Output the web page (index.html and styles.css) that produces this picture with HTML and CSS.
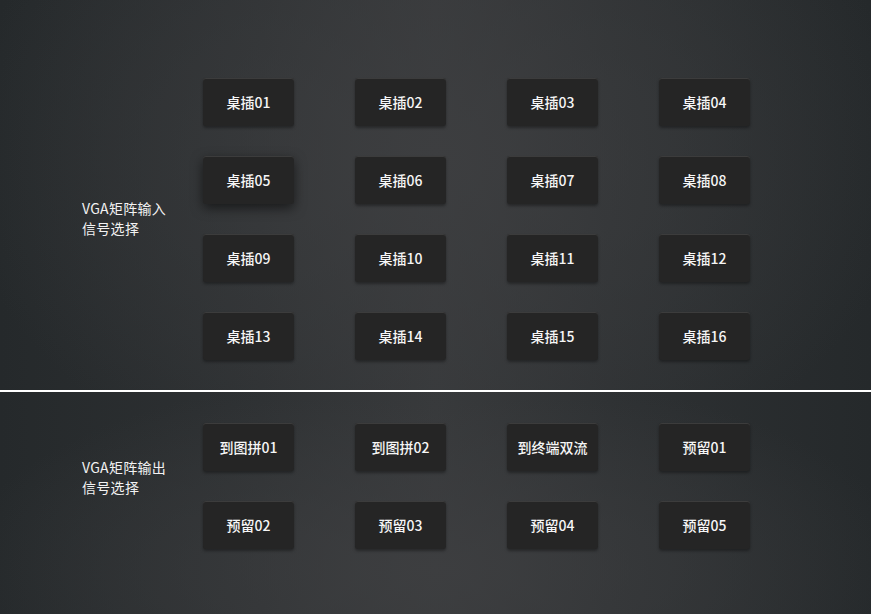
FILE: index.html
```html
<!DOCTYPE html>
<html lang="zh-CN">
<head>
<meta charset="utf-8">
<title>VGA矩阵</title>
<link rel="stylesheet" href="styles.css">
</head>
<body>
<section class="panel panel-in">
  <div class="label label-in">VGA矩阵输入<br>信号选择</div>
  <div class="grid">
    <div class="btn">桌插01</div>
    <div class="btn">桌插02</div>
    <div class="btn">桌插03</div>
    <div class="btn">桌插04</div>
    <div class="btn btn-hover">桌插05</div>
    <div class="btn">桌插06</div>
    <div class="btn">桌插07</div>
    <div class="btn">桌插08</div>
    <div class="btn">桌插09</div>
    <div class="btn">桌插10</div>
    <div class="btn">桌插11</div>
    <div class="btn">桌插12</div>
    <div class="btn">桌插13</div>
    <div class="btn">桌插14</div>
    <div class="btn">桌插15</div>
    <div class="btn">桌插16</div>
  </div>
</section>
<div class="divider"></div>
<section class="panel panel-out">
  <div class="label label-out">VGA矩阵输出<br>信号选择</div>
  <div class="grid">
    <div class="btn">到图拼01</div>
    <div class="btn">到图拼02</div>
    <div class="btn">到终端双流</div>
    <div class="btn">预留01</div>
    <div class="btn">预留02</div>
    <div class="btn">预留03</div>
    <div class="btn">预留04</div>
    <div class="btn">预留05</div>
  </div>
</section>
</body>
</html>
```
FILE: styles.css
```css
html, body {
  margin: 0;
  padding: 0;
}
body {
  width: 871px;
  height: 614px;
  overflow: hidden;
  font-family: "Noto Sans CJK SC", "Noto Sans", sans-serif;
  color: #f2f2f2;
  background: #2c2e30;
}
.panel {
  display: flex;
  align-items: flex-start;
  box-sizing: border-box;
  background:
    radial-gradient(ellipse 55% 90% at 50% 40%, rgba(62,63,65,0.85) 0%, rgba(62,63,65,0) 100%),
    linear-gradient(90deg, #25292b 0%, #2e3133 30%, #37393b 50%, #2e3133 70%, #25292b 100%);
}
.panel-in {
  height: 390px;
  padding-top: 78px;
}
.panel-out {
  height: 222px;
  padding-top: 31px;
  background:
    radial-gradient(ellipse 55% 90% at 50% 80%, rgba(62,63,65,0.85) 0%, rgba(62,63,65,0) 100%),
    linear-gradient(90deg, #25292b 0%, #2e3133 30%, #37393b 50%, #2e3133 70%, #25292b 100%);
}
.divider {
  height: 2px;
  background: #ffffff;
}
.label {
  width: 121px;
  padding-left: 82px;
  font-size: 14px;
  line-height: 20px;
  color: #f2f2f2;
  letter-spacing: 0.3px;
}
.label-in {
  margin-top: 120px;
}
.label-out {
  margin-top: 34px;
}
.grid {
  display: grid;
  grid-template-columns: repeat(4, 91px);
  grid-auto-rows: 48px;
  column-gap: 61px;
  row-gap: 30px;
}
.btn {
  display: flex;
  align-items: center;
  justify-content: center;
  background: #252525;
  border-radius: 3px;
  font-size: 14px;
  font-weight: 500;
  color: #f6f6f6;
  box-shadow: inset 0 1px 0 #3c3c3c, 0 2px 3px rgba(0,0,0,0.35);
  white-space: nowrap;
}
.btn-hover {
  box-shadow: inset 0 1px 0 #3c3c3c, 0 4px 12px rgba(0,0,0,0.55);
}
```
